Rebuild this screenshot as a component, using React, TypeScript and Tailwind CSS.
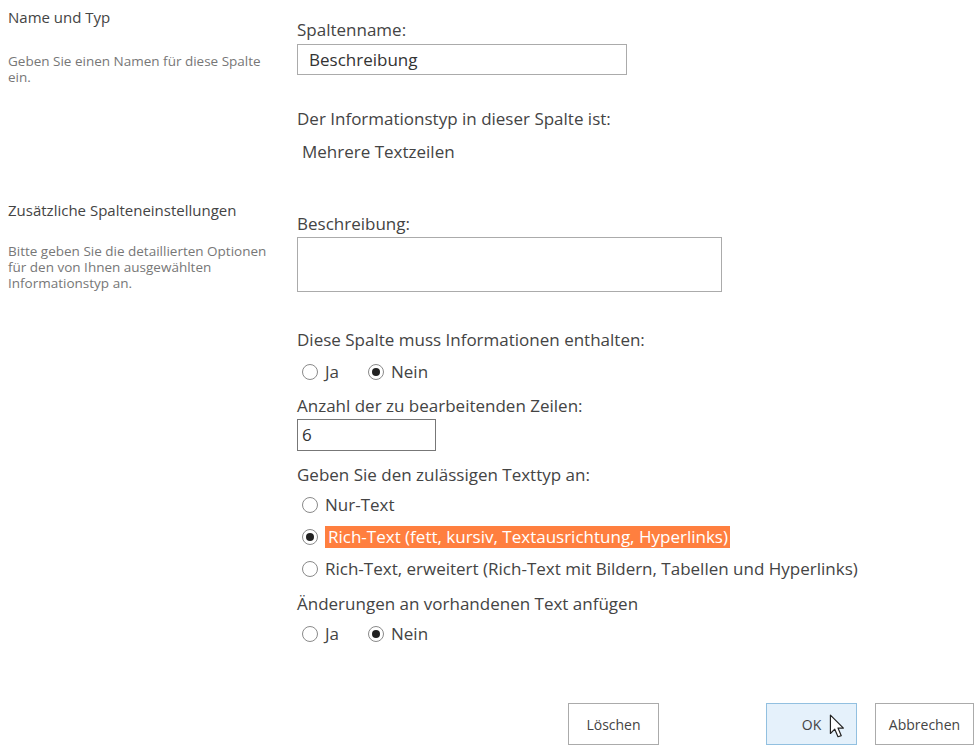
import { useState } from "react";

const font = { fontFamily: '"Open Sans", "Noto Sans", sans-serif' };

function Radio({ checked, label, highlight = false }: { checked: boolean; label: string; highlight?: boolean }) {
  return (
    <label className="flex items-center gap-[7px]">
      <span className="flex h-[16px] w-[16px] shrink-0 items-center justify-center rounded-full border border-[#8a8a8a] bg-white">
        {checked && <span className="h-[8px] w-[8px] rounded-full bg-[#222]" />}
      </span>
      <span className={highlight ? "bg-[#ff7f3f] pl-[3px] pr-[2px] leading-[22px] text-white" : "leading-[22px]"}>{label}</span>
    </label>
  );
}

function Cursor() {
  return (
    <svg width="18" height="26" viewBox="0 0 16 24" className="pointer-events-none absolute left-[62px] top-[10px]">
      <path d="M1 1 L1 18 L5 14 L8 21 L11 20 L8 13 L13 13 Z" fill="#fff" stroke="#222" strokeWidth="1.1" strokeLinejoin="round" />
    </svg>
  );
}

export default function App() {
  const [name] = useState("Beschreibung");

  return (
    <div className="h-[749px] w-[980px] bg-white text-[#444]" style={font}>
      <div className="flex">
        <div className="w-[297px] shrink-0 pl-[8px]">
          <div className="pt-[6px] text-[15px] leading-[22px] text-[#444]">Name und Typ</div>
          <div className="mt-[25px] w-[270px] text-[13.5px] leading-[16px] text-[#777]">
            Geben Sie einen Namen für diese Spalte ein.
          </div>
        </div>
        <div className="flex-1 text-[17px]">
          <div className="pt-[19px] leading-[22px]">Spaltenname:</div>
          <div className="mt-[3px] flex h-[31px] w-[330px] items-center border border-[#ababab] pl-[11px] text-[#333]">{name}</div>
          <div className="mt-[33px] leading-[22px]">Der Informationstyp in dieser Spalte ist:</div>
          <div className="mt-[11px] pl-[5px] leading-[22px]">Mehrere Textzeilen</div>
        </div>
      </div>

      <div className="mt-[36px] flex">
        <div className="w-[297px] shrink-0 pl-[8px]">
          <div className="text-[15px] leading-[22px] text-[#444]">Zusätzliche Spalteneinstellungen</div>
          <div className="mt-[22px] w-[272px] text-[13.5px] leading-[16px] text-[#777]">
            Bitte geben Sie die detaillierten Optionen für den von Ihnen ausgewählten Informationstyp an.
          </div>
        </div>
        <div className="flex-1 text-[17px]">
          <div className="pt-[14px] leading-[22px]">Beschreibung:</div>
          <div className="mt-[2px] h-[55px] w-[425px] border border-[#ababab]" />
          <div className="mt-[37px] leading-[22px]">Diese Spalte muss Informationen enthalten:</div>
          <div className="mt-[10px] flex gap-[29px] pl-[5px]">
            <Radio checked={false} label="Ja" />
            <Radio checked label="Nein" />
          </div>
          <div className="mt-[12px] leading-[22px]">Anzahl der zu bearbeitenden Zeilen:</div>
          <div className="mt-[2px] flex h-[32px] w-[139px] items-center border border-[#777] pl-[4px] text-[#333]">6</div>
          <div className="mt-[13px] leading-[22px]">Geben Sie den zulässigen Texttyp an:</div>
          <div className="mt-[8px] flex flex-col gap-[10px] pl-[5px]">
            <Radio checked={false} label="Nur-Text" />
            <Radio checked label="Rich-Text (fett, kursiv, Textausrichtung, Hyperlinks)" highlight />
            <Radio checked={false} label="Rich-Text, erweitert (Rich-Text mit Bildern, Tabellen und Hyperlinks)" />
          </div>
          <div className="mt-[13px] leading-[22px]">Änderungen an vorhandenen Text anfügen</div>
          <div className="mt-[8px] flex gap-[29px] pl-[5px]">
            <Radio checked={false} label="Ja" />
            <Radio checked label="Nein" />
          </div>
        </div>
      </div>

      <div className="mt-[58px] flex text-[14px] text-[#444]">
        <div className="w-[568px] shrink-0" />
        <button className="h-[42px] w-[91px] border border-[#ababab] bg-white">Löschen</button>
        <div className="w-[107px]" />
        <button className="relative h-[42px] w-[91px] border border-[#92c0e0] bg-[#e5f1fb]">
          OK
          <Cursor />
        </button>
        <div className="w-[18px]" />
        <button className="h-[42px] w-[99px] border border-[#ababab] bg-white">Abbrechen</button>
      </div>
    </div>
  );
}
